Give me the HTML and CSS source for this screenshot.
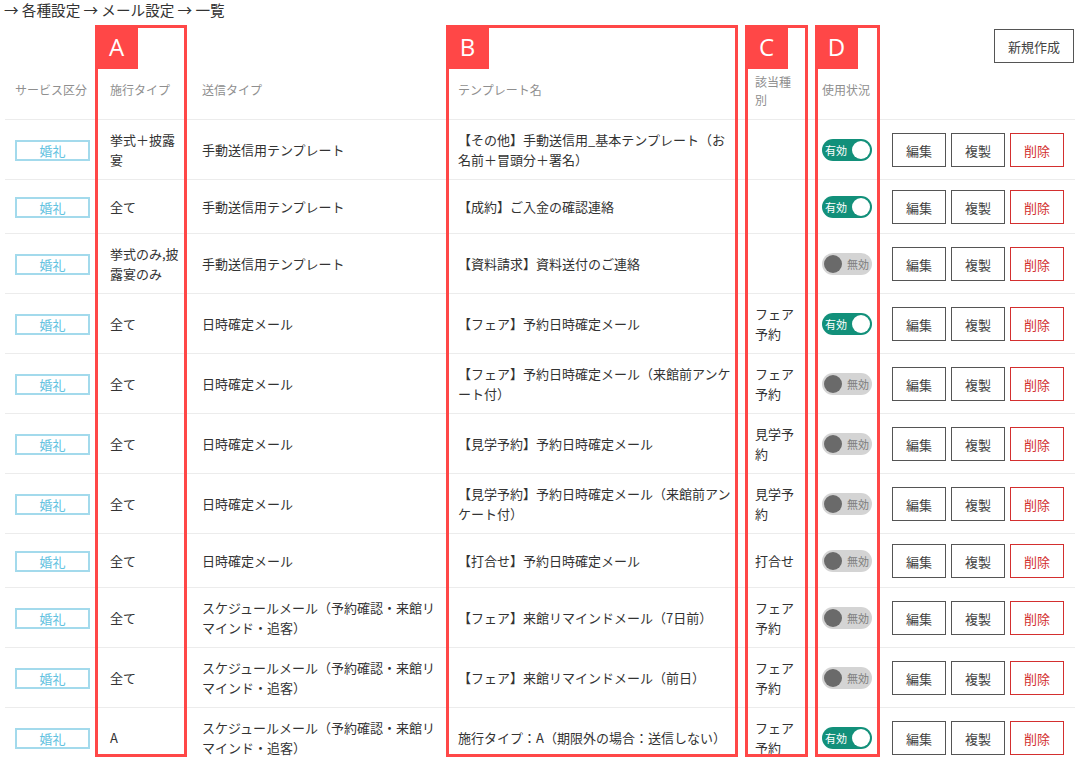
FILE: index.html
```html
<!DOCTYPE html>
<html lang="ja">
<head>
<meta charset="utf-8">
<title>メール設定 一覧</title>
<link rel="stylesheet" href="styles.css">
</head>
<body>
<div class="page">
  <div class="breadcrumb">→ 各種設定 → メール設定 → 一覧</div>
  <div class="toolbar"><button class="btn btn-new">新規作成</button></div>

  <div class="table">
    <div class="row head">
      <div class="cell">サービス区分</div>
      <div class="cell">施行タイプ</div>
      <div class="cell">送信タイプ</div>
      <div class="cell">テンプレート名</div>
      <div class="cell">該当種別</div>
      <div class="cell">使用状況</div>
      <div class="cell"></div>
    </div>

    <div class="row">
      <div class="cell"><span class="badge">婚礼</span></div>
      <div class="cell">挙式＋披露宴</div>
      <div class="cell">手動送信用テンプレート</div>
      <div class="cell">【その他】手動送信用_基本テンプレート（お名前＋冒頭分＋署名）</div>
      <div class="cell"></div>
      <div class="cell"><span class="toggle on"><span class="tlabel">有効</span><span class="knob"></span></span></div>
      <div class="cell actions"><button class="btn">編集</button><button class="btn">複製</button><button class="btn btn-del">削除</button></div>
    </div>

    <div class="row">
      <div class="cell"><span class="badge">婚礼</span></div>
      <div class="cell">全て</div>
      <div class="cell">手動送信用テンプレート</div>
      <div class="cell">【成約】ご入金の確認連絡</div>
      <div class="cell"></div>
      <div class="cell"><span class="toggle on"><span class="tlabel">有効</span><span class="knob"></span></span></div>
      <div class="cell actions"><button class="btn">編集</button><button class="btn">複製</button><button class="btn btn-del">削除</button></div>
    </div>

    <div class="row">
      <div class="cell"><span class="badge">婚礼</span></div>
      <div class="cell">挙式のみ,披露宴のみ</div>
      <div class="cell">手動送信用テンプレート</div>
      <div class="cell">【資料請求】資料送付のご連絡</div>
      <div class="cell"></div>
      <div class="cell"><span class="toggle off"><span class="knob"></span><span class="tlabel">無効</span></span></div>
      <div class="cell actions"><button class="btn">編集</button><button class="btn">複製</button><button class="btn btn-del">削除</button></div>
    </div>

    <div class="row">
      <div class="cell"><span class="badge">婚礼</span></div>
      <div class="cell">全て</div>
      <div class="cell">日時確定メール</div>
      <div class="cell">【フェア】予約日時確定メール</div>
      <div class="cell">フェア予約</div>
      <div class="cell"><span class="toggle on"><span class="tlabel">有効</span><span class="knob"></span></span></div>
      <div class="cell actions"><button class="btn">編集</button><button class="btn">複製</button><button class="btn btn-del">削除</button></div>
    </div>

    <div class="row">
      <div class="cell"><span class="badge">婚礼</span></div>
      <div class="cell">全て</div>
      <div class="cell">日時確定メール</div>
      <div class="cell">【フェア】予約日時確定メール（来館前アンケート付）</div>
      <div class="cell">フェア予約</div>
      <div class="cell"><span class="toggle off"><span class="knob"></span><span class="tlabel">無効</span></span></div>
      <div class="cell actions"><button class="btn">編集</button><button class="btn">複製</button><button class="btn btn-del">削除</button></div>
    </div>

    <div class="row">
      <div class="cell"><span class="badge">婚礼</span></div>
      <div class="cell">全て</div>
      <div class="cell">日時確定メール</div>
      <div class="cell">【見学予約】予約日時確定メール</div>
      <div class="cell">見学予約</div>
      <div class="cell"><span class="toggle off"><span class="knob"></span><span class="tlabel">無効</span></span></div>
      <div class="cell actions"><button class="btn">編集</button><button class="btn">複製</button><button class="btn btn-del">削除</button></div>
    </div>

    <div class="row">
      <div class="cell"><span class="badge">婚礼</span></div>
      <div class="cell">全て</div>
      <div class="cell">日時確定メール</div>
      <div class="cell">【見学予約】予約日時確定メール（来館前アンケート付）</div>
      <div class="cell">見学予約</div>
      <div class="cell"><span class="toggle off"><span class="knob"></span><span class="tlabel">無効</span></span></div>
      <div class="cell actions"><button class="btn">編集</button><button class="btn">複製</button><button class="btn btn-del">削除</button></div>
    </div>

    <div class="row">
      <div class="cell"><span class="badge">婚礼</span></div>
      <div class="cell">全て</div>
      <div class="cell">日時確定メール</div>
      <div class="cell">【打合せ】予約日時確定メール</div>
      <div class="cell">打合せ</div>
      <div class="cell"><span class="toggle off"><span class="knob"></span><span class="tlabel">無効</span></span></div>
      <div class="cell actions"><button class="btn">編集</button><button class="btn">複製</button><button class="btn btn-del">削除</button></div>
    </div>

    <div class="row">
      <div class="cell"><span class="badge">婚礼</span></div>
      <div class="cell">全て</div>
      <div class="cell">スケジュールメール（予約確認・来館リマインド・追客）</div>
      <div class="cell">【フェア】来館リマインドメール（7日前）</div>
      <div class="cell">フェア予約</div>
      <div class="cell"><span class="toggle off"><span class="knob"></span><span class="tlabel">無効</span></span></div>
      <div class="cell actions"><button class="btn">編集</button><button class="btn">複製</button><button class="btn btn-del">削除</button></div>
    </div>

    <div class="row">
      <div class="cell"><span class="badge">婚礼</span></div>
      <div class="cell">全て</div>
      <div class="cell">スケジュールメール（予約確認・来館リマインド・追客）</div>
      <div class="cell">【フェア】来館リマインドメール（前日）</div>
      <div class="cell">フェア予約</div>
      <div class="cell"><span class="toggle off"><span class="knob"></span><span class="tlabel">無効</span></span></div>
      <div class="cell actions"><button class="btn">編集</button><button class="btn">複製</button><button class="btn btn-del">削除</button></div>
    </div>

    <div class="row">
      <div class="cell"><span class="badge">婚礼</span></div>
      <div class="cell">A</div>
      <div class="cell">スケジュールメール（予約確認・来館リマインド・追客）</div>
      <div class="cell">施行タイプ：A（期限外の場合：送信しない）</div>
      <div class="cell">フェア予約</div>
      <div class="cell"><span class="toggle on"><span class="tlabel">有効</span><span class="knob"></span></span></div>
      <div class="cell actions"><button class="btn">編集</button><button class="btn">複製</button><button class="btn btn-del">削除</button></div>
    </div>
  </div>

  <div class="mark mark-a"><span class="mark-label">A</span></div>
  <div class="mark mark-b"><span class="mark-label">B</span></div>
  <div class="mark mark-c"><span class="mark-label">C</span></div>
  <div class="mark mark-d"><span class="mark-label">D</span></div>
</div>
</body>
</html>
```

FILE: styles.css
```css
html, body {
  margin: 0;
  padding: 0;
  background: #fff;
}
body {
  font-family: "Noto Sans CJK JP", "Noto Sans", sans-serif;
  color: #333;
  font-size: 13px;
  overflow: hidden;
}
.page {
  position: relative;
  width: 1085px;
  height: 762px;
  overflow: hidden;
}
.breadcrumb {
  height: 20px;
  line-height: 20px;
  font-size: 14.6px;
  padding-left: 4px;
  color: #333;
}
.toolbar {
  display: flex;
  justify-content: flex-end;
  margin-top: 9px;
  padding-right: 11px;
}
.btn {
  font-family: "Noto Sans CJK JP", "Noto Sans", sans-serif;
  font-size: 13px;
  color: #444;
  background: #fff;
  border: 1px solid #555;
  border-radius: 0;
  margin: 0;
  padding: 0;
  width: 54px;
  height: 34px;
  box-sizing: border-box;
  cursor: pointer;
}
.btn-new {
  width: 80px;
  height: 34px;
}
.btn-del {
  color: #d32f2f;
  border-color: #d32f2f;
}
.table {
  margin-left: 5px;
  width: 1070px;
}
.row {
  display: grid;
  grid-template-columns: 95px 92px 256px 297px 67px 72px 1fr;
  align-items: center;
  border-bottom: 1px solid #ececec;
  padding: 10px 0 9px;
  line-height: 20px;
}
.row.head {
  min-height: 57px;
  box-sizing: border-box;
  padding: 0;
  font-size: 12px;
  color: #8f8f8f;
  line-height: 18px;
}
.cell {
  padding: 0 10px;
  min-height: 20px;
}
.cell.actions {
  padding-left: 8px;
  padding-right: 0;
  display: flex;
  gap: 5px;
}
.badge {
  display: flex;
  align-items: center;
  justify-content: center;
  width: 75px;
  height: 21px;
  box-sizing: border-box;
  border: 2px solid #a3daec;
  color: #62c2df;
  font-size: 13px;
  line-height: 1;
}
.toggle {
  display: flex;
  align-items: center;
  width: 50px;
  height: 22px;
  border-radius: 11px;
  box-sizing: border-box;
  padding: 0 2px;
  font-size: 11px;
  line-height: 1;
  justify-content: space-between;
}
.toggle.on {
  background: #12907a;
  color: #fff;
  padding-left: 3px;
}
.toggle.off {
  background: #d4d4d4;
  color: #7e7e7e;
  padding-right: 3px;
}
.knob {
  width: 18px;
  height: 18px;
  border-radius: 50%;
  background: #fff;
}
.toggle.off .knob {
  background: #6a6a6a;
}
.mark {
  position: absolute;
  top: 25px;
  height: 732px;
  box-sizing: border-box;
  border: 3px solid #ff4747;
  pointer-events: none;
}
.mark-label {
  position: absolute;
  left: -3px;
  top: -3px;
  width: 43px;
  height: 44px;
  background: #ff4747;
  color: #fff;
  font-family: "Open Sans", "Noto Sans", sans-serif;
  font-size: 24px;
  line-height: 44px;
  text-align: center;
}
.mark-a { left: 95px; width: 92px; }
.mark-b { left: 446px; width: 292px; }
.mark-c { left: 745px; width: 63px; }
.mark-d { left: 815px; width: 65px; }
```
